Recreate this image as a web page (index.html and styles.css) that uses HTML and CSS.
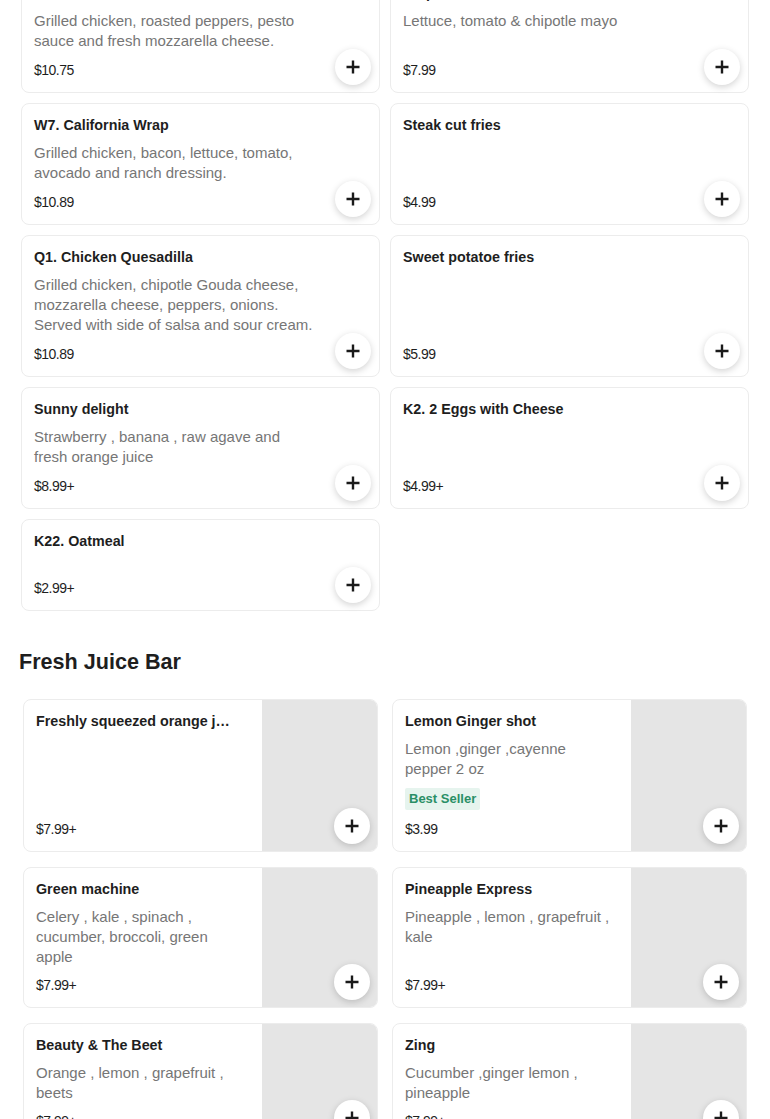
FILE: index.html
```html
<!DOCTYPE html>
<html lang="en">
<head>
<meta charset="utf-8">
<title>Menu</title>
<link rel="stylesheet" href="styles.css">
</head>
<body>
<main class="page">
  <div class="menu-grid">
    <article class="item">
      <h3 class="item-title">W6. Chicken Pesto Panini</h3>
      <p class="item-desc">Grilled chicken, roasted peppers, pesto sauce and fresh mozzarella cheese.</p>
      <p class="item-price">$10.75</p>
      <button class="add-btn" aria-label="Add"><svg viewBox="0 0 14 14" width="14" height="14"><path d="M7 0.5v13M0.5 7h13"/></svg></button>
    </article>
    <article class="item">
      <h3 class="item-title">Chipotle Chicken Sandwich</h3>
      <p class="item-desc">Lettuce, tomato &amp; chipotle mayo</p>
      <p class="item-price">$7.99</p>
      <button class="add-btn" aria-label="Add"><svg viewBox="0 0 14 14" width="14" height="14"><path d="M7 0.5v13M0.5 7h13"/></svg></button>
    </article>
    <article class="item">
      <h3 class="item-title">W7. California Wrap</h3>
      <p class="item-desc">Grilled chicken, bacon, lettuce, tomato, avocado and ranch dressing.</p>
      <p class="item-price">$10.89</p>
      <button class="add-btn" aria-label="Add"><svg viewBox="0 0 14 14" width="14" height="14"><path d="M7 0.5v13M0.5 7h13"/></svg></button>
    </article>
    <article class="item">
      <h3 class="item-title">Steak cut fries</h3>
      <p class="item-price">$4.99</p>
      <button class="add-btn" aria-label="Add"><svg viewBox="0 0 14 14" width="14" height="14"><path d="M7 0.5v13M0.5 7h13"/></svg></button>
    </article>
    <article class="item">
      <h3 class="item-title">Q1. Chicken Quesadilla</h3>
      <p class="item-desc">Grilled chicken, chipotle Gouda cheese, mozzarella cheese, peppers, onions. Served with side of salsa and sour cream.</p>
      <p class="item-price">$10.89</p>
      <button class="add-btn" aria-label="Add"><svg viewBox="0 0 14 14" width="14" height="14"><path d="M7 0.5v13M0.5 7h13"/></svg></button>
    </article>
    <article class="item">
      <h3 class="item-title">Sweet potatoe fries</h3>
      <p class="item-price">$5.99</p>
      <button class="add-btn" aria-label="Add"><svg viewBox="0 0 14 14" width="14" height="14"><path d="M7 0.5v13M0.5 7h13"/></svg></button>
    </article>
    <article class="item">
      <h3 class="item-title">Sunny delight</h3>
      <p class="item-desc">Strawberry , banana , raw agave and fresh orange juice</p>
      <p class="item-price">$8.99+</p>
      <button class="add-btn" aria-label="Add"><svg viewBox="0 0 14 14" width="14" height="14"><path d="M7 0.5v13M0.5 7h13"/></svg></button>
    </article>
    <article class="item">
      <h3 class="item-title">K2. 2 Eggs with Cheese</h3>
      <p class="item-price">$4.99+</p>
      <button class="add-btn" aria-label="Add"><svg viewBox="0 0 14 14" width="14" height="14"><path d="M7 0.5v13M0.5 7h13"/></svg></button>
    </article>
    <article class="item">
      <h3 class="item-title">K22. Oatmeal</h3>
      <p class="item-price">$2.99+</p>
      <button class="add-btn" aria-label="Add"><svg viewBox="0 0 14 14" width="14" height="14"><path d="M7 0.5v13M0.5 7h13"/></svg></button>
    </article>
  </div>

  <section class="juice">
    <h2 class="section-title">Fresh Juice Bar</h2>
    <div class="juice-grid">
      <article class="juice-item">
        <div class="juice-body">
          <h3 class="item-title juice-title">Freshly squeezed orange juice</h3>
          <p class="item-price">$7.99+</p>
        </div>
        <div class="juice-img"></div>
        <button class="add-btn juice-btn" aria-label="Add"><svg viewBox="0 0 14 14" width="14" height="14"><path d="M7 0.5v13M0.5 7h13"/></svg></button>
      </article>
      <article class="juice-item">
        <div class="juice-body">
          <h3 class="item-title juice-title">Lemon Ginger shot</h3>
          <p class="item-desc juice-desc">Lemon ,ginger ,cayenne pepper 2 oz</p>
          <span class="badge">Best Seller</span>
          <p class="item-price">$3.99</p>
        </div>
        <div class="juice-img"></div>
        <button class="add-btn juice-btn" aria-label="Add"><svg viewBox="0 0 14 14" width="14" height="14"><path d="M7 0.5v13M0.5 7h13"/></svg></button>
      </article>
      <article class="juice-item">
        <div class="juice-body">
          <h3 class="item-title juice-title">Green machine</h3>
          <p class="item-desc juice-desc">Celery , kale , spinach , cucumber, broccoli, green apple</p>
          <p class="item-price">$7.99+</p>
        </div>
        <div class="juice-img"></div>
        <button class="add-btn juice-btn" aria-label="Add"><svg viewBox="0 0 14 14" width="14" height="14"><path d="M7 0.5v13M0.5 7h13"/></svg></button>
      </article>
      <article class="juice-item">
        <div class="juice-body">
          <h3 class="item-title juice-title">Pineapple Express</h3>
          <p class="item-desc juice-desc">Pineapple , lemon , grapefruit , kale</p>
          <p class="item-price">$7.99+</p>
        </div>
        <div class="juice-img"></div>
        <button class="add-btn juice-btn" aria-label="Add"><svg viewBox="0 0 14 14" width="14" height="14"><path d="M7 0.5v13M0.5 7h13"/></svg></button>
      </article>
      <article class="juice-item">
        <div class="juice-body">
          <h3 class="item-title juice-title">Beauty &amp; The Beet</h3>
          <p class="item-desc juice-desc">Orange , lemon , grapefruit , beets</p>
          <p class="item-price">$7.99+</p>
        </div>
        <div class="juice-img"></div>
        <button class="add-btn juice-btn" aria-label="Add"><svg viewBox="0 0 14 14" width="14" height="14"><path d="M7 0.5v13M0.5 7h13"/></svg></button>
      </article>
      <article class="juice-item">
        <div class="juice-body">
          <h3 class="item-title juice-title">Zing</h3>
          <p class="item-desc juice-desc">Cucumber ,ginger lemon , pineapple</p>
          <p class="item-price">$7.99+</p>
        </div>
        <div class="juice-img"></div>
        <button class="add-btn juice-btn" aria-label="Add"><svg viewBox="0 0 14 14" width="14" height="14"><path d="M7 0.5v13M0.5 7h13"/></svg></button>
      </article>
    </div>
  </section>
</main>
</body>
</html>
```

FILE: styles.css
```css
* { box-sizing: border-box; }

html, body {
  margin: 0;
  padding: 0;
  background: #ffffff;
}

body {
  font-family: "Liberation Sans", Arial, sans-serif;
  color: #1c1c1c;
  width: 770px;
  overflow-x: hidden;
}

.page {
  margin-top: -29px;
}

.menu-grid {
  display: grid;
  grid-template-columns: 1fr 1fr;
  gap: 10px;
  padding: 0 21px;
}

.item {
  position: relative;
  display: flex;
  flex-direction: column;
  min-height: 92px;
  padding: 11px 13px 12px 12px;
  border: 1px solid #ececec;
  border-radius: 8px;
  background: #fff;
}

.item-title {
  margin: 0;
  font-size: 14.3px;
  font-weight: 700;
  line-height: 20px;
  color: #1e1e1e;
}

.item-desc {
  margin: 8px 0 0;
  max-width: 281px;
  font-size: 15px;
  line-height: 20px;
  color: #767676;
}

.item-price {
  margin: auto 0 0;
  padding-top: 9px;
  font-size: 14px;
  line-height: 20px;
  letter-spacing: -0.5px;
  color: #1e1e1e;
}

.add-btn {
  position: absolute;
  right: 8px;
  bottom: 7px;
  width: 36px;
  height: 36px;
  padding: 0;
  border: none;
  border-radius: 50%;
  background: #fff;
  box-shadow: 0 2px 7px rgba(0, 0, 0, 0.18);
  display: flex;
  align-items: center;
  justify-content: center;
}

.add-btn svg path {
  stroke: #1a1a1a;
  stroke-width: 2.4;
  fill: none;
}

.juice {
  margin-top: 37px;
}

.section-title {
  margin: 0 0 23px;
  padding-left: 19px;
  font-size: 21.6px;
  line-height: 28px;
  font-weight: 700;
  color: #1e1e1e;
}

.juice-grid {
  display: grid;
  grid-template-columns: 1fr 1fr;
  gap: 15px 14px;
  padding: 0 23px;
}

.juice-item {
  position: relative;
  display: grid;
  grid-template-columns: 1fr 115px;
  border: 1px solid #ececec;
  border-radius: 8px;
  overflow: hidden;
  background: #fff;
}

.juice-body {
  display: flex;
  flex-direction: column;
  padding: 11px 12px 12px 12px;
  min-width: 0;
}

.juice-body .item-price {
  padding-top: 8px;
}

.juice-title {
  max-width: 194px;
  white-space: nowrap;
  overflow: hidden;
  text-overflow: ellipsis;
}

.juice-desc {
  max-width: 208px;
}

.juice-img {
  background: #e5e5e5;
}

.juice-btn {
  right: 7px;
  bottom: 7px;
}

.badge {
  align-self: flex-start;
  margin-top: 9px;
  padding: 0 4px;
  height: 22px;
  line-height: 22px;
  font-size: 13px;
  font-weight: 700;
  color: #2a8f66;
  background: #e6f4ee;
  border-radius: 2px;
}

.juice-body .badge + .item-price {
  padding-top: 9px;
}
```
